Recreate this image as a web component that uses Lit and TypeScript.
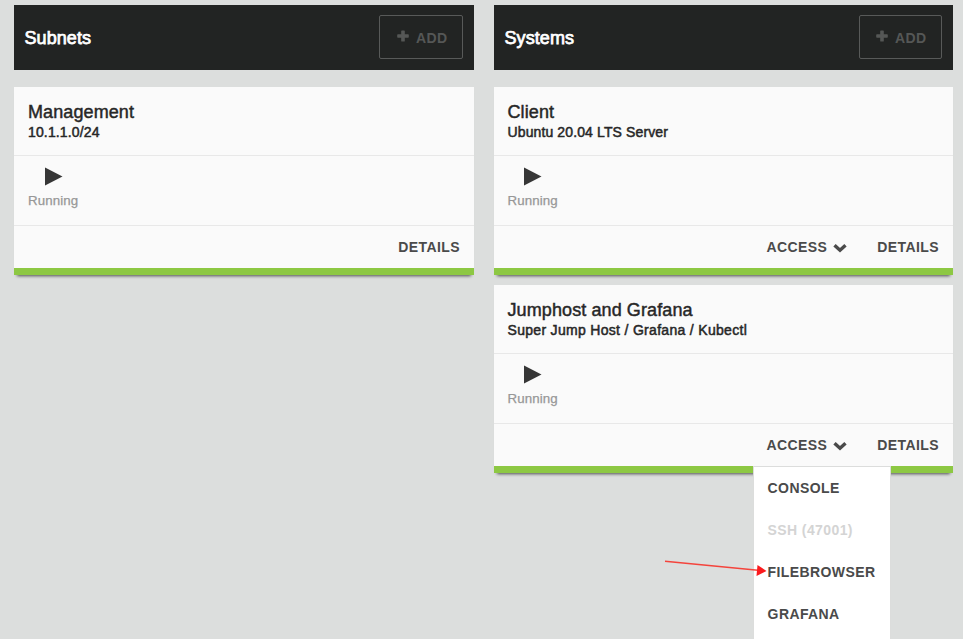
import { LitElement, html, css, nothing } from "lit";
import { customElement, property } from "lit/decorators.js";

const font = css`"Liberation Sans", Arial, sans-serif`;

interface MenuItem {
  label: string;
  disabled?: boolean;
}

@customElement("panel-header")
class PanelHeader extends LitElement {
  @property() heading = "";

  static styles = css`
    :host {
      display: flex;
      align-items: center;
      justify-content: space-between;
      box-sizing: border-box;
      height: 65px;
      padding: 0 11px 1px 10.5px;
      background: #222423;
      color: #fff;
    }
    .heading {
      margin: 0;
      padding-top: 2px;
      font: 400 18px/22px ${font};
      letter-spacing: 0.08px;
      -webkit-text-stroke: 0.75px;
    }
    .add {
      display: flex;
      align-items: center;
      box-sizing: border-box;
      width: var(--add-width, 84px);
      height: 44px;
      padding: 2px 0 0 var(--add-inset, 17px);
      border: 1px solid #585a59;
      border-radius: 2px;
      background: none;
      color: #555756;
      font: 700 14px/16px ${font};
      letter-spacing: 0.4px;
    }
    .plus {
      display: block;
      width: 12px;
      height: 12px;
      margin: -4px 7px 0 0;
      fill: currentColor;
    }
  `;

  render() {
    return html`
      <h2 class="heading">${this.heading}</h2>
      <button class="add">
        <svg class="plus" viewBox="0 0 12 12">
          <path d="M4.900 .4h2.200q.7 0 .7.7v3.200h3.300q.7 0 .7.7v2q0 .7-.7.7H7.800v3.200q0 .7-.7.7H4.900q-.7 0-.7-.7V7.700H.9q-.7 0-.7-.7V5q0-.7.7-.7h3.300V1.100q0-.7.7-.7z" />
        </svg>
        <span>ADD</span>
      </button>
    `;
  }
}

@customElement("resource-card")
class ResourceCard extends LitElement {
  @property() name = "";
  @property() detail = "";
  @property({ type: Boolean }) access = false;
  @property({ attribute: false }) menu: MenuItem[] = [];

  static styles = css`
    :host {
      display: block;
      box-sizing: border-box;
      height: 188px;
      border-bottom: 7px solid #8dc843;
      background: #fafafa;
      color: #272727;
      font: 400 14px/18px ${font};
      box-shadow: 0 4px 3px -3px rgba(0, 0, 0, 0.65);
    }
    .title {
      box-sizing: border-box;
      height: 69px;
      padding: 15px 14px 0 var(--card-inset, 14px);
      border-bottom: 1px solid #e8e8e8;
    }
    .name {
      margin: 0;
      font: 400 18px/21px ${font};
      letter-spacing: 0.1px;
      -webkit-text-stroke: 0.45px;
    }
    .detail {
      letter-spacing: var(--detail-tracking, 0.14px);
      -webkit-text-stroke: 0.5px;
    }
    .status {
      box-sizing: border-box;
      height: 70px;
      padding: 11px 14px 0 var(--card-inset, 14px);
      border-bottom: 1px solid #e8e8e8;
    }
    .play {
      display: block;
      width: 18px;
      height: 19px;
      margin-left: 16.5px;
      fill: #363636;
    }
    .state {
      margin-top: 6px;
      color: #979797;
      font-size: 13.3px;
      letter-spacing: 0.1px;
      -webkit-text-stroke: 0.25px;
    }
    .actions {
      display: flex;
      justify-content: flex-end;
      align-items: center;
      box-sizing: border-box;
      height: 42px;
      padding-right: 14px;
      gap: 30px;
      color: #4a4a4a;
      font-weight: 700;
      letter-spacing: 0.4px;
    }
    .action {
      position: relative;
      display: flex;
      align-items: center;
    }
    .chevron {
      display: block;
      width: 14px;
      height: 10px;
      margin: 2px 0 0 6px;
      fill: none;
      stroke: currentColor;
      stroke-width: 3.4;
    }
    .menu {
      position: absolute;
      top: 30px;
      left: -14px;
      box-sizing: border-box;
      width: 138px;
      padding-bottom: 10px;
      border: 1px solid #dcdddc;
      background: #fff;
      z-index: 1;
    }
    .item {
      height: 42px;
      padding-left: 14px;
      line-height: 43px;
      white-space: nowrap;
    }
    .disabled {
      color: #d4d4d4;
    }
  `;

  render() {
    return html`
      <div class="title">
        <h3 class="name">${this.name}</h3>
        <div class="detail">${this.detail}</div>
      </div>
      <div class="status">
        <svg class="play" viewBox="0 0 18 19"><path d="M0 .5V18.500L17.500 9.500z" /></svg>
        <div class="state">Running</div>
      </div>
      <div class="actions">
        ${this.access
          ? html`<div class="action">
              <span>ACCESS</span>
              <svg class="chevron" viewBox="0 0 14 10"><path d="M1.500 2.200 7 7.300 12.500 2.200" /></svg>
              ${this.menu.length
                ? html`<div class="menu">
                    ${this.menu.map(
                      (m) => html`<div class="item ${m.disabled ? "disabled" : ""}">${m.label}</div>`
                    )}
                  </div>`
                : nothing}
            </div>`
          : nothing}
        <span class="action">DETAILS</span>
      </div>
    `;
  }
}

@customElement("app-root")
class AppRoot extends LitElement {
  static styles = css`
    :host {
      position: relative;
      display: grid;
      grid-template-columns: 460px 459px;
      align-items: start;
      column-gap: 20px;
      box-sizing: border-box;
      height: 639px;
      padding: 5px 10px 0 14px;
      overflow: hidden;
      background: #dcdedd;
    }
    .column {
      display: flex;
      flex-direction: column;
      gap: 10px;
    }
    .header {
      margin-bottom: 7px;
    }
    .systems {
      --add-width: 83px;
      --add-inset: 16px;
      --card-inset: 13.5px;
    }
    .client {
      --detail-tracking: 0.12px;
    }
    .jumphost {
      --detail-tracking: 0.31px;
    }
    .pointer {
      position: absolute;
      left: 660px;
      top: 555px;
      width: 110px;
      height: 25px;
      z-index: 2;
    }
    .shaft {
      stroke: #f4443c;
      stroke-width: 1.5;
    }
    .tip {
      fill: #fb1a1e;
    }
  `;

  private accessMenu: MenuItem[] = [
    { label: "CONSOLE" },
    { label: "SSH (47001)", disabled: true },
    { label: "FILEBROWSER" },
    { label: "GRAFANA" },
  ];

  render() {
    return html`
      <section class="column">
        <panel-header class="header" heading="Subnets"></panel-header>
        <resource-card name="Management" detail="10.1.1.0/24"></resource-card>
      </section>
      <section class="column systems">
        <panel-header class="header" heading="Systems"></panel-header>
        <resource-card class="client" name="Client" detail="Ubuntu 20.04 LTS Server" access></resource-card>
        <resource-card
          class="jumphost"
          name="Jumphost and Grafana"
          detail="Super Jump Host / Grafana / Kubectl"
          access
          .menu=${this.accessMenu}
        ></resource-card>
      </section>
      <svg class="pointer" viewBox="0 0 110 25">
        <path class="shaft" d="M5 6.300 98 15.300" />
        <path class="tip" d="M97.500 10 106.500 16 96.500 21z" />
      </svg>
    `;
  }
}
